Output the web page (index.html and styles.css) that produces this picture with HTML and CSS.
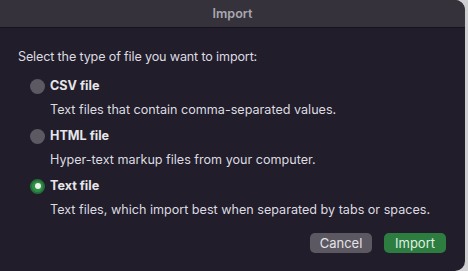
FILE: index.html
```html
<!DOCTYPE html>
<html lang="en">
<head>
    <meta charset="UTF-8">
    <meta name="viewport" content="width=device-width, initial-scale=1.0">
    <title>Import</title>
    <link rel="stylesheet" href="styles.css">
</head>
<body>
    <div class="window">
        <div class="titlebar">Import</div>

        <div class="content">
            <p class="intro">Select the type of file you want to import:</p>

            <div class="options">
                <label class="option">
                    <span class="radio"></span>
                    <span class="option-name">CSV file</span>
                    <span class="option-desc">Text files that contain comma-separated values.</span>
                </label>

                <label class="option">
                    <span class="radio"></span>
                    <span class="option-name">HTML file</span>
                    <span class="option-desc">Hyper-text markup files from your computer.</span>
                </label>

                <label class="option">
                    <span class="radio checked"></span>
                    <span class="option-name">Text file</span>
                    <span class="option-desc">Text files, which import best when separated by tabs or spaces.</span>
                </label>
            </div>

            <div class="buttons">
                <button class="btn btn-cancel">Cancel</button>
                <button class="btn btn-import">Import</button>
            </div>
        </div>
    </div>
</body>
</html>
```

FILE: styles.css
```css
body {
    margin: 0;
    background: #cfcfd2;
    font-family: 'Inter', 'Liberation Sans', sans-serif;
    font-size: 12.6px;
    overflow: hidden;
}

.window {
    width: 465px;
    height: 271px;
    background: #211d2a;
    border-radius: 0 10px 10px 0;
    overflow: hidden;
}

.titlebar {
    height: 27px;
    line-height: 27px;
    background: #35323c;
    border-bottom: 1px solid #16131c;
    color: #a9a6ae;
    font-weight: 600;
    text-align: center;
}

.content {
    padding: 21px 19px 0 18px;
    color: #dcdbe0;
}

.intro {
    margin: 0;
    line-height: 16px;
    letter-spacing: -0.15px;
}

.options {
    display: flex;
    flex-direction: column;
    gap: 10px;
    margin-top: 13px;
}

.option {
    display: grid;
    grid-template-columns: 15px auto;
    column-gap: 5px;
    row-gap: 8px;
    align-items: center;
    padding-left: 12px;
    line-height: 16px;
}

.radio {
    width: 15px;
    height: 15px;
    border-radius: 50%;
    background: #5c5962;
    box-sizing: border-box;
}

.radio.checked {
    background: #2f8f46;
    border: 2px solid #23703a;
    display: flex;
    align-items: center;
    justify-content: center;
}

.radio.checked::after {
    content: '';
    width: 6px;
    height: 6px;
    border-radius: 50%;
    background: #e9f3ea;
}

.option-name {
    font-weight: 700;
    color: #e6e5e9;
}

.option-desc {
    grid-column: 2;
}

.buttons {
    display: flex;
    justify-content: flex-end;
    gap: 12px;
    margin-top: 15px;
}

.btn {
    width: 62px;
    height: 20px;
    border: none;
    border-radius: 5px;
    font-family: inherit;
    font-size: 13px;
    padding: 0;
}

.btn-cancel {
    background: #5b5862;
    color: #e4e3e7;
}

.btn-import {
    background: #2e7d40;
    color: #dff0e3;
}
```
